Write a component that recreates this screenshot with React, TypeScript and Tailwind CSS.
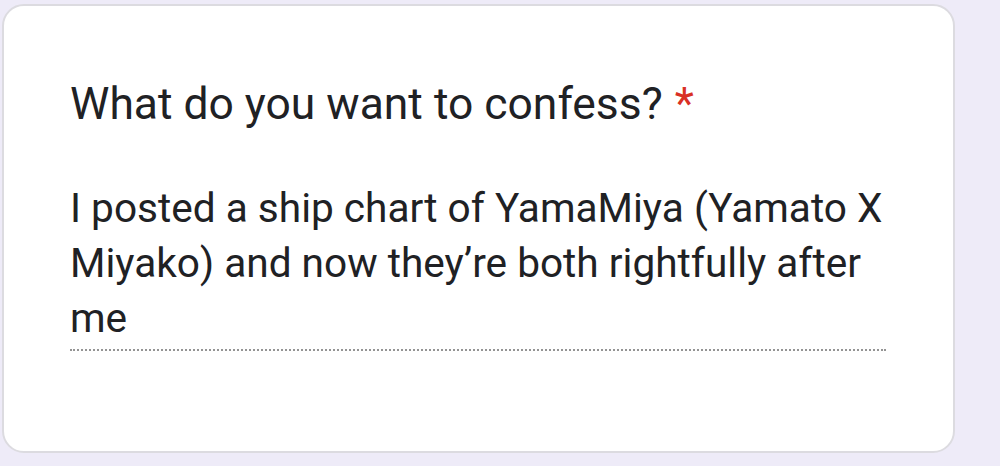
export default function App() {
  return (
    <div className="w-[1000px] h-[466px] bg-[#eeebf8] pt-[4px] pl-[2px] overflow-hidden font-['Roboto',sans-serif]">
      <div className="w-[953px] h-[449px] bg-white rounded-[22px] border-2 border-[#dcdbe0] pl-[66px] pt-[72px]">
        <h1 className="text-[44.4px] leading-[52px] text-[#202124]">
          What do you want to confess?
          <span className="text-[#d93025] ml-[12px]">*</span>
        </h1>
        <div className="w-[816px] mt-[51px] pb-[3px] border-b-2 border-dotted border-[#949494]">
          <p className="text-[40.6px] leading-[55px] text-[#202124]">
            I posted a ship chart of YamaMiya (Yamato X Miyako) and now they’re both rightfully after me
          </p>
        </div>
      </div>
    </div>
  );
}
